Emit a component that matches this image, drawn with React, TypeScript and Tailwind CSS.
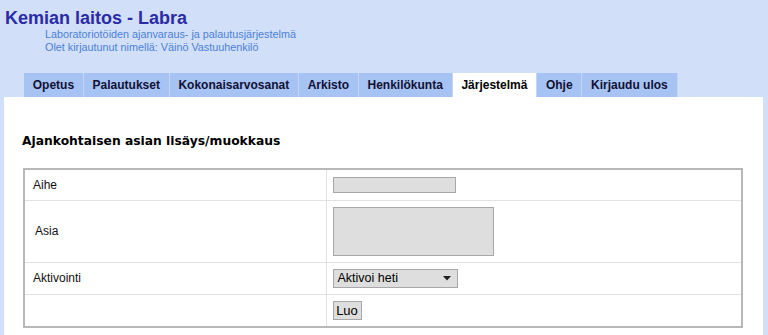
import React from "react";

const tabs = [
  "Opetus",
  "Palautukset",
  "Kokonaisarvosanat",
  "Arkisto",
  "Henkilökunta",
  "Järjestelmä",
  "Ohje",
  "Kirjaudu ulos",
];

export default function App() {
  return (
    <div className="w-[768px] h-[335px] overflow-hidden bg-[#d1dff8] font-['Liberation_Sans',Arial,sans-serif] flex flex-col">
      <div className="pl-[5px] pt-[7px]">
        <h1 className="text-[18px] leading-[22px] font-bold text-[#2b2ba6]">Kemian laitos - Labra</h1>
        <div className="pl-[40px] -mt-[1px] text-[10.8px] leading-[13px] text-[#4c7fd6]">
          <div>Laboratoriotöiden ajanvaraus- ja palautusjärjestelmä</div>
          <div>Olet kirjautunut nimellä: Väinö Vastuuhenkilö</div>
        </div>
      </div>

      <div className="flex pl-[24px] mt-[19px] h-[24px]">
        {tabs.map((t) => (
          <div
            key={t}
            className={
              t === "Järjestelmä"
                ? "px-[8.75px] flex items-center text-[12px] font-bold text-black bg-white border-r border-[#c4d6f7]"
                : "px-[8.75px] flex items-center text-[12px] font-bold text-[#111133] bg-[#a6c3f4] border-r border-[#c4d6f7]"
            }
          >
            {t}
          </div>
        ))}
      </div>

      <div className="flex-1 bg-white ml-[4px] mr-[5px] pl-[18px] pr-[20px]">
        <h2 className="pt-[36px] text-[12.3px] leading-[16px] font-bold text-black font-['DejaVu_Sans',Verdana,sans-serif]">
          Ajankohtaisen asian lisäys/muokkaus
        </h2>
        <table className="mt-[19px] ml-[1px] w-[720px] border-collapse border-2 border-[#b8b8b8] text-[12px] text-[#111]">
          <tbody>
            <tr className="h-[31px]">
              <td className="w-[302px] pl-[8px] border border-[#e2e2e2]">Aihe</td>
              <td className="pl-[6px] border border-[#e2e2e2]">
                <div className="w-[123px] h-[16px] bg-[#dedede] border border-[#a8a8a8]" />
              </td>
            </tr>
            <tr className="h-[62px]">
              <td className="pl-[10px] border border-[#e2e2e2]">Asia</td>
              <td className="pl-[6px] border border-[#e2e2e2]">
                <div className="w-[161px] h-[49px] bg-[#dedede] border border-[#a8a8a8]" />
              </td>
            </tr>
            <tr className="h-[32px]">
              <td className="pl-[8px] border border-[#e2e2e2]">Aktivointi</td>
              <td className="pl-[6px] border border-[#e2e2e2]">
                <div className="w-[125px] h-[19px] bg-[#dedede] border border-[#a8a8a8] flex items-center justify-between pl-[4px] pr-[6px] text-[12.5px] text-black">
                  <span>Aktivoi heti</span>
                  <svg width="8" height="5" viewBox="0 0 8 5">
                    <polygon points="0,0 8,0 4,4.5" fill="#222" />
                  </svg>
                </div>
              </td>
            </tr>
            <tr className="h-[33px]">
              <td className="border border-[#e2e2e2]" />
              <td className="pl-[6px] border border-[#e2e2e2]">
                <div className="w-[29px] h-[19px] bg-[#dedede] border border-[#a8a8a8] flex items-center justify-center text-[13px] text-black">
                  Luo
                </div>
              </td>
            </tr>
          </tbody>
        </table>
      </div>
    </div>
  );
}
